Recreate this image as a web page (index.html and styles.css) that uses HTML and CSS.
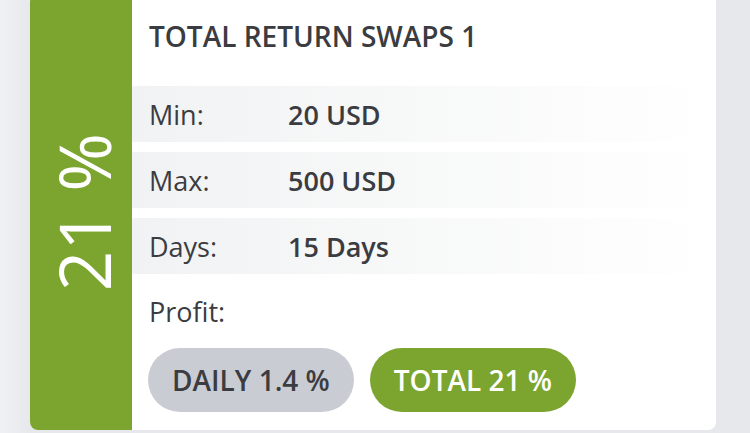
FILE: index.html
```html
<!DOCTYPE html>
<html lang="en">
<head>
    <meta charset="UTF-8">
    <meta name="viewport" content="width=device-width, initial-scale=1.0">
    <title>Total Return Swaps</title>
    <link rel="stylesheet" href="styles.css">
</head>
<body>
    <section class="plan-card">
        <div class="plan-rate">
            <span>21 %</span>
        </div>
        <div class="plan-body">
            <h2>TOTAL RETURN SWAPS 1</h2>
            <div class="plan-row">
                <span class="label">Min:</span>
                <span class="value">20 USD</span>
            </div>
            <div class="plan-row">
                <span class="label">Max:</span>
                <span class="value">500 USD</span>
            </div>
            <div class="plan-row">
                <span class="label">Days:</span>
                <span class="value">15 Days</span>
            </div>
            <p class="profit-label">Profit:</p>
            <div class="profit-pills">
                <span class="pill pill-daily">DAILY 1.4 %</span>
                <span class="pill pill-total">TOTAL 21 %</span>
            </div>
        </div>
    </section>
</body>
</html>
```

FILE: styles.css
```css
body {
    font-family: "Open Sans", "Noto Sans", sans-serif;
    background: linear-gradient(to right, #eff1f3 0px, #e6e8eb 30px, #e6e8eb 100%);
    margin: 0;
    padding: 0;
    color: #3b3c41;
    height: 433px;
    overflow: hidden;
}
.plan-card {
    display: flex;
    width: 686px;
    height: 436px;
    margin: -6px 0 0 30px;
    background: #ffffff;
    border-radius: 8px;
    overflow: hidden;
}
.plan-rate {
    width: 102px;
    flex-shrink: 0;
    background-color: #7ba52f; /* verde */
    color: #ffffff;
    display: flex;
    align-items: center;
    justify-content: center;
}
.plan-rate span {
    writing-mode: vertical-rl;
    transform: rotate(180deg);
    font-size: 71px;
    line-height: 1;
    margin-left: 4px;
}
.plan-body {
    flex: 1;
    padding-top: 28px;
}
.plan-body h2 {
    margin: 0 0 0 17px;
    font-size: 28px;
    font-weight: 600;
    line-height: 28px;
    height: 64px;
}
.plan-row {
    display: flex;
    align-items: center;
    height: 56px;
    margin-bottom: 10px;
    padding-left: 17px;
    font-size: 27px;
    background: linear-gradient(to right, #f1f2f3, #ffffff);
}
.plan-row .label {
    width: 139px;
}
.plan-row .value {
    font-weight: 600;
}
.profit-label {
    margin: 3px 0 0 17px;
    font-size: 27px;
    line-height: 56px;
    height: 64px;
}
.profit-pills {
    display: flex;
    gap: 16px;
    padding-left: 16px;
}
.pill {
    display: inline-flex;
    align-items: center;
    height: 64px;
    padding: 0 24px;
    border-radius: 32px;
    font-size: 28px;
    font-weight: 600;
}
.pill-daily {
    background-color: #c9ccd3;
    color: #3b3c41;
}
.pill-total {
    background-color: #7ba52f;
    color: #ffffff;
}
```
